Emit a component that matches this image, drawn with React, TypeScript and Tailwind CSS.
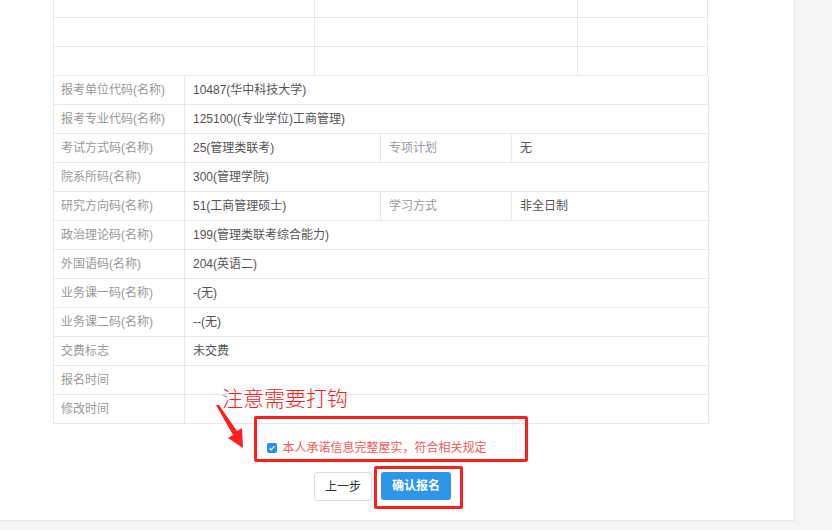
import React from "react";

const F = { fontFamily: '"Liberation Sans","Noto Sans CJK SC",sans-serif' };

type Row = { l: string; v: string; l2?: string; v2?: string };
const rows: Row[] = [
  { l: "报考单位代码(名称)", v: "10487(华中科技大学)" },
  { l: "报考专业代码(名称)", v: "125100((专业学位)工商管理)" },
  { l: "考试方式码(名称)", v: "25(管理类联考)", l2: "专项计划", v2: "无" },
  { l: "院系所码(名称)", v: "300(管理学院)" },
  { l: "研究方向码(名称)", v: "51(工商管理硕士)", l2: "学习方式", v2: "非全日制" },
  { l: "政治理论码(名称)", v: "199(管理类联考综合能力)" },
  { l: "外国语码(名称)", v: "204(英语二)" },
  { l: "业务课一码(名称)", v: "-(无)" },
  { l: "业务课二码(名称)", v: "--(无)" },
  { l: "交费标志", v: "未交费" },
  { l: "报名时间", v: "" },
  { l: "修改时间", v: "" },
];

export default function App() {
  return (
    <div className="w-[832px] h-[530px] bg-[#f5f5f5] overflow-hidden text-[12px]" style={F}>
      <div className="relative w-[795px] h-[521px] bg-white border-r border-b border-[#e8e8e8]">
        <div className="pl-[53px] pt-0">
          {/* top empty rows */}
          <div className="w-[655px] border-l border-r border-[#e8e8e8]">
            {[18, 29, 29].map((h, i) => (
              <div key={i} className="flex border-b border-[#e8e8e8]" style={{ height: h }}>
                <div className="w-[261px] border-r border-[#e8e8e8]" />
                <div className="w-[263px] border-r border-[#e8e8e8]" />
                <div className="flex-1" />
              </div>
            ))}
          </div>
          {/* info table */}
          <div className="w-[656px] border-l border-r border-[#e8e8e8]">
            {rows.map((r, i) => (
              <div key={i} className="flex h-[29px] border-b border-[#e8e8e8] items-stretch">
                <div className="w-[131px] border-r border-[#e8e8e8] pl-[7px] flex items-center text-[#999]">{r.l}</div>
                {r.l2 ? (
                  <>
                    <div className="w-[196px] border-r border-[#e8e8e8] pl-[8px] flex items-center text-[#555]">{r.v}</div>
                    <div className="w-[131px] border-r border-[#e8e8e8] pl-[8px] flex items-center text-[#999]">{r.l2}</div>
                    <div className="flex-1 pl-[8px] flex items-center text-[#555]">{r.v2}</div>
                  </>
                ) : (
                  <div className="flex-1 pl-[8px] flex items-center text-[#555]">{r.v}</div>
                )}
              </div>
            ))}
          </div>
          {/* agreement */}
          <div className="w-[656px] flex justify-center pt-[15px]">
            <label className="flex items-center gap-[5px] ml-[-8px]">
              <span className="w-[10px] h-[10px] rounded-[2px] bg-[#2d8cf0] flex items-center justify-center">
                <svg width="8" height="8" viewBox="0 0 8 8">
                  <path d="M1.5 4.2 L3.2 5.8 L6.5 2.2" stroke="white" strokeWidth="1.2" fill="none" />
                </svg>
              </span>
              <span className="text-[#f05a5a]">本人承诺信息完整屋实，符合相关规定</span>
            </label>
          </div>
          <div className="w-[656px] flex justify-center gap-[9px] pt-[15px] pl-[3px]">
            <button className="w-[58px] h-[29px] border border-[#dcdcdc] rounded-[3px] bg-white text-[#333]">上一步</button>
            <button className="w-[70px] h-[28px] rounded-[3px] bg-[#2e96e8] text-white font-semibold">确认报名</button>
          </div>
        </div>

        {/* annotations */}
        <div className="absolute left-[222px] top-[383px] text-[21px] leading-[28px] font-light text-[#f5231e]" style={{ fontFamily: '"Noto Sans CJK SC",sans-serif' }}>
          注意需要打钩
        </div>
        <svg className="absolute left-[210px] top-[398px]" width="40" height="54" viewBox="0 0 40 54">
          <polygon points="6,7 9,7 27,33 32,30 33,50 18,40 23,37" fill="#ff1f1f" />
        </svg>
        <div className="absolute left-[254px] top-[416px] w-[274px] h-[46px] border-[3px] border-[#ff1f1f] rounded-[2px]" />
        <div className="absolute left-[374px] top-[466px] w-[89px] h-[43px] border-[3px] border-[#ff1f1f] rounded-[2px]" />
      </div>
    </div>
  );
}
